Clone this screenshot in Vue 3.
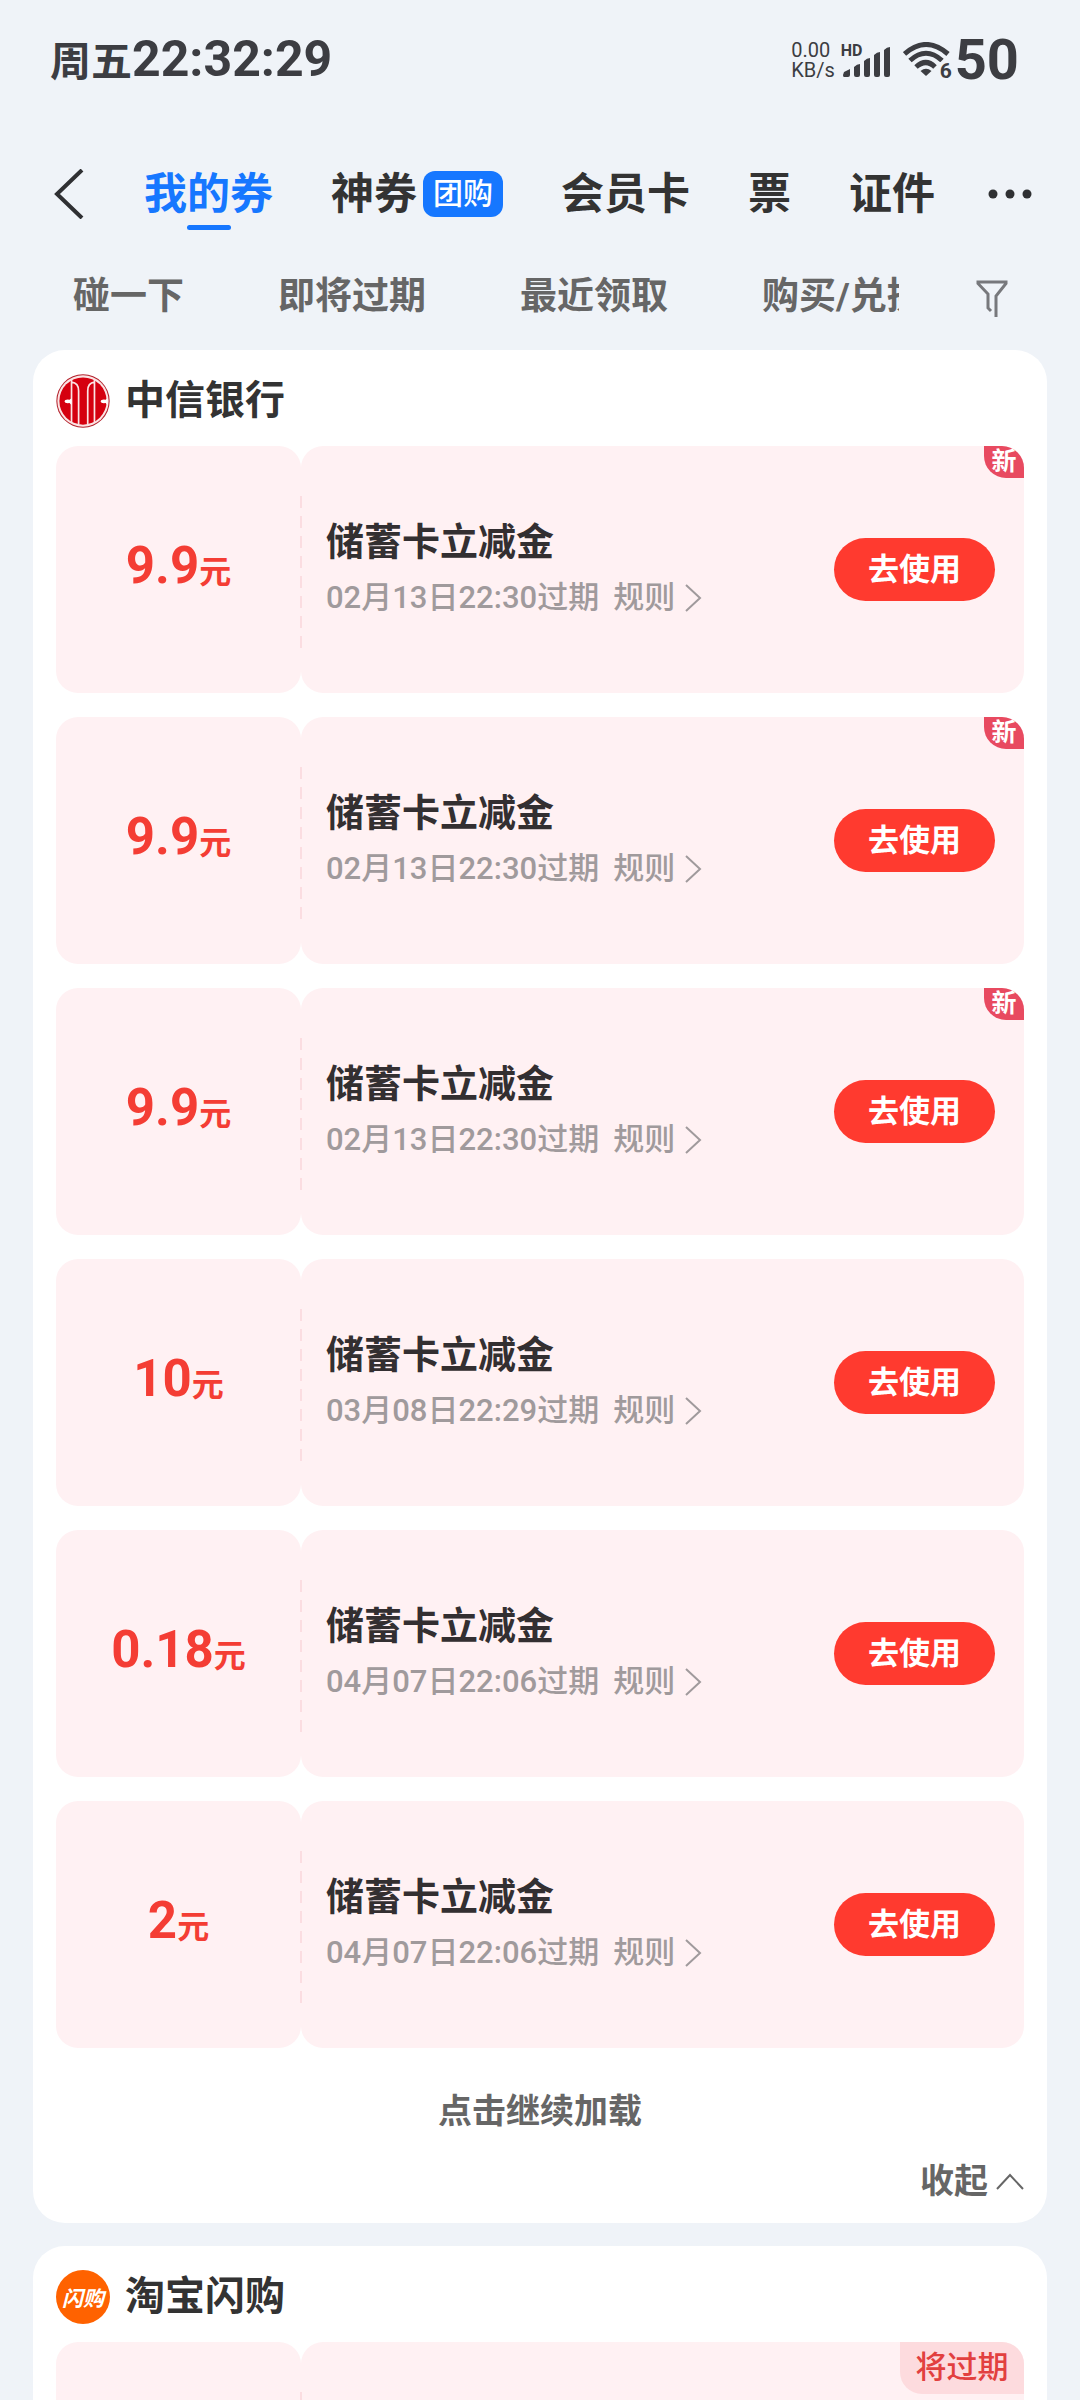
<script setup>
import { ref } from 'vue'

const tabs = [
  { name: '我的券', active: true },
  { name: '神券', badge: '团购' },
  { name: '会员卡' },
  { name: '票' },
  { name: '证件' },
]
const filters = ['碰一下', '即将过期', '最近领取', '购买/兑换']
const coupons = ref([
  { id: 1, amount: '9.9', expires: '02月13日22:30过期', fresh: true },
  { id: 2, amount: '9.9', expires: '02月13日22:30过期', fresh: true },
  { id: 3, amount: '9.9', expires: '02月13日22:30过期', fresh: true },
  { id: 4, amount: '10', expires: '03月08日22:29过期' },
  { id: 5, amount: '0.18', expires: '04月07日22:06过期' },
  { id: 6, amount: '2', expires: '04月07日22:06过期' },
])
</script>

<template>
  <div class="app">
    <div class="status">
      <div class="clock"><span class="day">周五</span><span class="digits">22:32:29</span></div>
      <div class="indicators">
        <div class="speed"><span>0.00</span><span>KB/s</span></div>
        <div class="signal">
          <span class="hd">HD</span>
          <svg width="50" height="34" viewBox="0 0 50 34" fill="#3c3d42">
            <path d="M0 32l1-3 6-3v6q0 2-2 2H1q-1 0-1-2zM11 24q3-3 6-3v11q0 2-2 2h-2q-2 0-2-2zM21 18q3-3 6-3v17q0 2-2 2h-2q-2 0-2-2zM31 12q3-3 6-3v23q0 2-2 2h-2q-2 0-2-2zM41 7q3-3 6-3v28q0 2-2 2h-2q-2 0-2-2z" />
          </svg>
        </div>
        <div class="wifi">
          <svg width="48" height="36" viewBox="0 0 48 36" fill="none" stroke="#3c3d42" stroke-width="5">
            <path d="M1.500 12Q23 -7 45 12" />
            <path d="M7 18.500Q23 4 39 18.500" />
            <path d="M13 25Q23 16 32 25" />
            <path d="M17.500 29Q23 24.500 28.500 29L23 34z" fill="#3c3d42" stroke="none" />
          </svg>
          <span class="gen">6</span>
        </div>
        <span class="battery">50</span>
      </div>
    </div>

    <nav class="nav">
      <button class="back" aria-label="返回">
        <svg width="32" height="50" viewBox="0 0 32 50" fill="none" stroke="#2f3033" stroke-width="4">
          <path d="M28 1L3 25L28 49" />
        </svg>
      </button>
      <a v-for="tab in tabs" :key="tab.name" href="#" class="tab" :class="{ active: tab.active }">
        {{ tab.name }}<span v-if="tab.badge" class="tab-badge">{{ tab.badge }}</span>
      </a>
      <button class="more" aria-label="更多">
        <svg width="46" height="12" viewBox="0 0 46 12" fill="#2f3033">
          <circle cx="6" cy="6" r="4.500" /><circle cx="23" cy="6" r="4.500" /><circle cx="40" cy="6" r="4.500" />
        </svg>
      </button>
    </nav>

    <div class="filters">
      <div class="filter-list">
        <a v-for="f in filters" :key="f" href="#" class="filter">{{ f }}</a>
      </div>
      <button class="funnel" aria-label="筛选">
        <svg width="32" height="38" viewBox="0 0 32 38" fill="none" stroke="#77787c" stroke-width="3">
          <path d="M20 37V16L30 3.500V2H2v1.500L12 14v14l3 3" />
        </svg>
      </button>
    </div>

    <main class="list">
      <section class="card">
        <header class="merchant">
          <svg class="logo" viewBox="0 0 160 160">
            <circle cx="80" cy="80" r="79" fill="#b3202b" />
            <circle cx="80" cy="80" r="76" fill="#fbe4e4" />
            <circle cx="80" cy="80" r="70" fill="#d5000f" />
            <g fill="none" stroke="#fbe4e4" stroke-width="5">
              <path d="M46 18V142M46 24Q67 26 67 50V148M114 18V142M114 24Q94 26 94 50V148" />
            </g>
            <path d="M46 72L40 76Q26 74 25 81Q26 88 40 86L46 92zM153 72L147 76Q133 74 132 81Q133 88 147 86L153 92z" fill="#fff" />
          </svg>
          <h2>中信银行</h2>
        </header>
        <ul class="coupons">
          <li v-for="c in coupons" :key="c.id" class="coupon">
            <div class="amount"><span class="value">{{ c.amount }}</span><span class="unit">元</span></div>
            <div class="detail">
              <div class="info">
                <h3>储蓄卡立减金</h3>
                <p>
                  <span>{{ c.expires }}</span>
                  <a href="#" class="rules">规则
                    <svg width="18" height="28" viewBox="0 0 18 28" fill="none" stroke="#a09a9c" stroke-width="2">
                      <path d="M2 1L16 14L2 27" />
                    </svg>
                  </a>
                </p>
              </div>
              <button class="use">去使用</button>
            </div>
            <span v-if="c.fresh" class="fresh">新</span>
          </li>
        </ul>
        <button class="load">点击继续加载</button>
        <button class="fold">收起
          <svg width="28" height="17" viewBox="0 0 28 17" fill="none" stroke="#666" stroke-width="2">
            <path d="M1 16L14 2L27 16" />
          </svg>
        </button>
      </section>

      <section class="card">
        <header class="merchant">
          <span class="logo flash">闪购</span>
          <h2>淘宝闪购</h2>
        </header>
        <ul class="coupons">
          <li class="coupon">
            <div class="amount"></div>
            <div class="detail"></div>
            <span class="expiring">将过期</span>
          </li>
        </ul>
      </section>
    </main>
  </div>
</template>

<style>
body {
  margin: 0;
  background: #eff3f8;
}
</style>

<style scoped>
* {
  box-sizing: border-box;
}
.app {
  display: flex;
  flex-direction: column;
  height: 100vh;
  overflow: hidden;
  background: #eff3f8;
  color: #333;
  font-family: Roboto, "Noto Sans CJK SC", sans-serif;
}
button {
  padding: 0;
  border: 0;
  background: none;
  color: inherit;
  font: inherit;
}
a {
  color: inherit;
  text-decoration: none;
}
h2, h3, p, ul {
  margin: 0;
  padding: 0;
}
svg {
  display: block;
  flex: none;
}
.status {
  display: flex;
  flex: none;
  align-items: center;
  justify-content: space-between;
  height: 120px;
  padding: 0 61px 0 50px;
  color: #3c3d42;
  font-weight: 700;
}
.clock {
  display: flex;
  align-items: baseline;
  line-height: 62px;
}
.day {
  font-size: 41px;
}
.digits {
  font-size: 50px;
}
.indicators {
  display: flex;
  align-items: center;
}
.speed {
  display: flex;
  flex-direction: column;
  font-size: 20px;
  font-weight: 400;
  line-height: 20px;
}
.signal {
  position: relative;
  margin: 0 10px 0 8px;
}
.hd {
  position: absolute;
  left: -2px;
  top: 0;
  font-size: 16px;
  line-height: 16px;
}
.wifi {
  position: relative;
  margin-right: 4px;
}
.gen {
  position: absolute;
  right: -1px;
  bottom: -3px;
  padding-left: 1px;
  background: #eff3f8;
  font-size: 21px;
  line-height: 19px;
}
.battery {
  font-size: 56px;
  line-height: 60px;
}
.nav {
  display: flex;
  flex: none;
  align-items: center;
  gap: 58px;
  height: 148px;
  padding: 0 46px 0 54px;
}
.tab {
  display: flex;
  position: relative;
  flex: none;
  align-items: center;
  gap: 6px;
  font-size: 43px;
  font-weight: 700;
  line-height: 60px;
}
.tab.active {
  color: #1677ff;
}
.tab.active::after {
  content: "";
  position: absolute;
  left: 50%;
  bottom: -6px;
  width: 44px;
  height: 5px;
  margin-left: -22px;
  border-radius: 3px;
  background: #1677ff;
}
.tab-badge {
  padding: 0 10px;
  border-radius: 12px;
  background: #1677ff;
  color: #fff;
  font-size: 30px;
  font-weight: 500;
  line-height: 46px;
}
.more {
  flex: none;
  margin-left: -6px;
}
.filters {
  display: flex;
  flex: none;
  align-items: center;
  justify-content: space-between;
  height: 82px;
  padding: 0 72px 24px 73px;
}
.filter-list {
  display: flex;
  flex: 1;
  gap: 94px;
  margin-right: 77px;
  overflow: hidden;
}
.filter {
  flex: none;
  color: #666;
  font-size: 37px;
  font-weight: 700;
  line-height: 54px;
}
.funnel {
  padding-top: 4px;
}
.list {
  display: flex;
  flex: 1;
  flex-direction: column;
  gap: 23px;
  min-height: 0;
  padding: 0 33px;
  overflow: hidden;
}
.card {
  display: flex;
  flex: none;
  flex-direction: column;
  padding: 0 23px 12px;
  border-radius: 32px;
  background: #fff;
}
.merchant {
  display: flex;
  align-items: center;
  gap: 15px;
  height: 96px;
  padding-top: 5px;
}
.logo {
  width: 54px;
  height: 54px;
}
.flash {
  display: flex;
  align-items: center;
  justify-content: center;
  border-radius: 50%;
  background: #ff6200;
  color: #fff;
  font-size: 21px;
  font-style: italic;
  font-weight: 700;
}
h2 {
  font-size: 40px;
  font-weight: 700;
  line-height: 60px;
}
.coupons {
  display: flex;
  flex-direction: column;
  gap: 24px;
  list-style: none;
}
.coupon {
  display: flex;
  position: relative;
  height: 247px;
}
.coupon::after {
  content: "";
  position: absolute;
  left: 244px;
  top: 50px;
  bottom: 38px;
  width: 2px;
  background: repeating-linear-gradient(#fbdde1 0 12px, transparent 12px 20px);
}
.amount {
  display: flex;
  align-items: baseline;
  justify-content: center;
  width: 245px;
  border-radius: 22px;
  background: #fff1f3;
  color: #f43d34;
  font-weight: 700;
  line-height: 240px;
}
.value {
  font-size: 51px;
}
.unit {
  font-size: 32px;
}
.detail {
  display: flex;
  flex: 1;
  align-items: center;
  justify-content: space-between;
  padding: 0 29px 0 25px;
  border-radius: 22px;
  background: #fff1f3;
}
h3 {
  color: #332f31;
  font-size: 38px;
  font-weight: 700;
  line-height: 56px;
}
.info p {
  display: flex;
  gap: 14px;
  color: #a09a9c;
  font-size: 31px;
  font-weight: 500;
  line-height: 56px;
}
.rules {
  display: flex;
  align-items: center;
  gap: 9px;
}
.use {
  width: 161px;
  border-radius: 32px;
  background: #ff3a2f;
  color: #fff;
  font-size: 31px;
  font-weight: 700;
  line-height: 63px;
}
.fresh, .expiring {
  position: absolute;
  top: 0;
  right: 0;
  border-radius: 0 22px;
  text-align: center;
}
.fresh {
  width: 40px;
  background: #e84a60;
  color: #fff;
  font-size: 25px;
  font-weight: 700;
  line-height: 32px;
}
.expiring {
  width: 124px;
  background: #fddbde;
  color: #e2403f;
  font-size: 31px;
  font-weight: 500;
  line-height: 52px;
}
.load {
  margin-top: 33px;
  color: #666;
  font-size: 34px;
  font-weight: 700;
  line-height: 60px;
}
.fold {
  display: flex;
  align-items: center;
  align-self: flex-end;
  gap: 8px;
  margin-top: 10px;
  color: #666;
  font-size: 34px;
  font-weight: 700;
  line-height: 60px;
}
</style>
